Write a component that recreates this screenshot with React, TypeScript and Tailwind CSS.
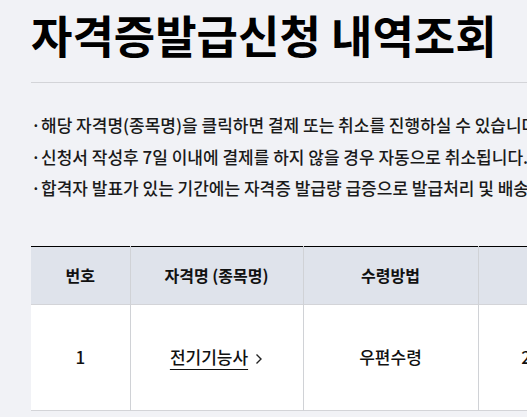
import React from "react";

function Chevron() {
  return (
    <svg width="8" height="12" viewBox="0 0 8 12" className="inline-block ml-[7px] align-[-1px]">
      <polyline points="1.5,1.5 6,6 1.5,10.5" fill="none" stroke="#222" strokeWidth="1.4" />
    </svg>
  );
}

export default function App() {
  const font = { fontFamily: '"Noto Sans CJK KR", "Noto Sans", sans-serif' };
  return (
    <div className="w-[527px] h-[417px] overflow-hidden bg-[#f1f2f6]" style={font}>
      <div className="w-[1200px] pl-[31px]">
        <h1 className="pt-[6px] text-[45px] leading-[58px] font-bold text-black">
          자격증발급신청 내역조회
        </h1>
        <div className="mt-[18px] h-px bg-[#d3d4d8]" />
        <ul className="mt-[26px] flex flex-col text-[17px] leading-[31.5px] text-[#1a1a1a] font-medium">
          <li className="flex">
            <span className="w-[10px]">·</span>
            <span>해당 자격명(종목명)을 클릭하면 결제 또는 취소를 진행하실 수 있습니다.</span>
          </li>
          <li className="flex">
            <span className="w-[10px]">·</span>
            <span>신청서 작성후 7일 이내에 결제를 하지 않을 경우 자동으로 취소됩니다.</span>
          </li>
          <li className="flex">
            <span className="w-[10px]">·</span>
            <span>합격자 발표가 있는 기간에는 자격증 발급량 급증으로 발급처리 및 배송이 지연될 수 있습니다.</span>
          </li>
        </ul>
        <table className="mt-[42px] border-collapse border-t border-t-black text-[#111]">
          <thead>
            <tr className="h-[58px] bg-[#dfe3eb] text-[16px]">
              <th className="w-[99px] border-r border-[#d0d2d6] font-bold">번호</th>
              <th className="w-[173px] border-r border-[#d0d2d6] font-bold">자격명 (종목명)</th>
              <th className="w-[175px] border-r border-[#d0d2d6] font-bold">수령방법</th>
              <th className="w-[176px] border-r border-[#d0d2d6] font-bold">신청일</th>
              <th className="w-[150px] font-bold">상태</th>
            </tr>
          </thead>
          <tbody>
            <tr className="h-[106px] bg-white border-t border-b border-[#d3d4d8] text-center text-[17px] font-medium">
              <td className="border-r border-[#d0d2d6]">1</td>
              <td className="border-r border-[#d0d2d6]">
                <span className="underline underline-offset-[5px] decoration-1">전기기능사</span>
                <Chevron />
              </td>
              <td className="border-r border-[#d0d2d6]">우편수령</td>
              <td className="border-r border-[#d0d2d6]">2024-05-20</td>
              <td>결제대기</td>
            </tr>
          </tbody>
        </table>
      </div>
    </div>
  );
}
